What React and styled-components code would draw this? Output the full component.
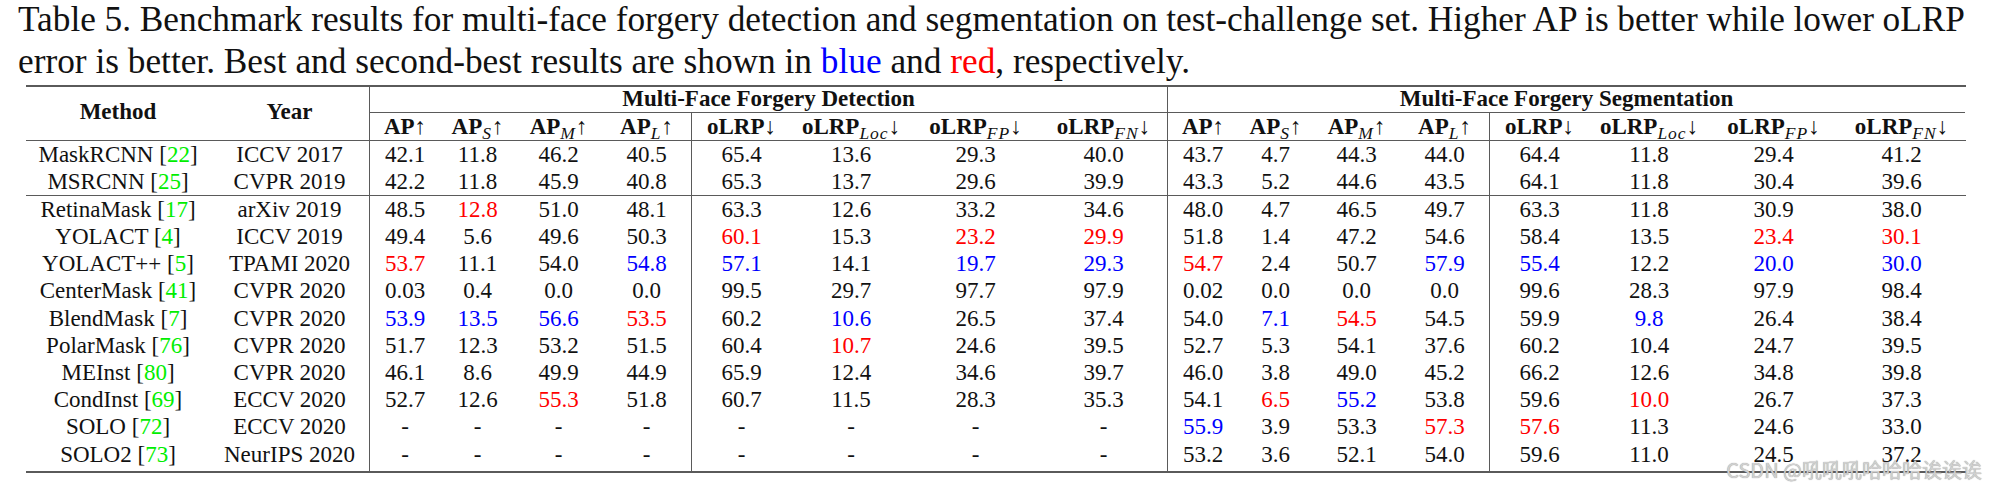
import React from "react";
import styled, { createGlobalStyle } from "styled-components";

const GlobalStyle = createGlobalStyle`
  html, body { margin: 0; padding: 0; background: #ffffff; }
  body { font-family: "Liberation Serif", "Times New Roman", serif; color: #111; }
`;

const COLS =
  "184px 159px 71px 75px 87px 89px 100px 120px 129px 127px 71px 75px 87px 89px 100px 120px 129px 127px";
const RULE = "#5a5a5a";

const Page = styled.div`
  position: relative;
  width: 2000px;
  height: 487px;
  overflow: hidden;
  background: #fff;
`;

const Caption = styled.div`
  margin: 0 0 0 18px;
  width: 1947px;
  font-size: 35.3px;
  color: #111;
`;

const JustLine = styled.div`
  line-height: 40px;
  text-align: justify;
  text-align-last: justify;
  word-spacing: -4px;
`;

const Line = styled.div`
  line-height: 43px;
  white-space: nowrap;
`;

const Tint = styled.span`
  color: ${(p) => p.$c};
`;

const Table = styled.div`
  margin: 2px 0 0 26px;
  width: 1940px;
  border-top: 2px solid ${RULE};
  border-bottom: 2px solid ${RULE};
  font-size: 23px;
`;

const Header = styled.div`
  display: grid;
  grid-template-columns: ${COLS};
  grid-template-rows: 26px 27px;
  border-bottom: 1px solid ${RULE};
  font-weight: bold;
`;

const SpanHead = styled.div`
  grid-row: 1 / span 2;
  grid-column: ${(p) => p.$col};
  display: flex;
  align-items: center;
  justify-content: center;
  padding-bottom: 4px;
`;

const GroupHead = styled.div`
  grid-row: 1;
  grid-column: ${(p) => p.$col} / span 8;
  text-align: center;
  line-height: 24px;
  border-left: 1px solid ${RULE};
  border-bottom: 1px solid ${RULE};
`;

const SubHead = styled.div`
  grid-row: 2;
  grid-column: ${(p) => p.$col};
  text-align: center;
  line-height: 27px;
  white-space: nowrap;
  border-left: ${(p) => (p.$sep ? `1px solid ${RULE}` : "none")};
`;

const Sub = styled.sub`
  font-style: italic;
  font-weight: normal;
  font-size: 17.5px;
  vertical-align: -5px;
  line-height: 0;
  letter-spacing: 1px;
`;

const Arrow = styled.span`
  font-weight: normal;
`;

const Row = styled.div`
  display: grid;
  grid-template-columns: ${COLS};
  height: ${(p) => p.$h}px;
  box-sizing: border-box;
  border-top: ${(p) => (p.$rule ? `1px solid ${RULE}` : "none")};
`;

const Cell = styled.div`
  text-align: center;
  line-height: 27px;
  white-space: nowrap;
  color: ${(p) => p.$c || "#111"};
  border-left: ${(p) => (p.$sep ? `1px solid ${RULE}` : "none")};
`;

const Cite = styled.span`
  color: #00ee00;
`;

const Watermark = styled.div`
  position: absolute;
  right: 18px;
  bottom: 5px;
  font-family: "Noto Sans CJK SC", "Noto Sans", sans-serif;
  font-size: 20px;
  line-height: 24px;
  color: #d0d0d0;
  text-shadow: 0 0 1px #8a8a8a;
`;

const SUBS = [
  { b: "AP", s: null, a: "↑" },
  { b: "AP", s: "S", a: "↑" },
  { b: "AP", s: "M", a: "↑" },
  { b: "AP", s: "L", a: "↑" },
  { b: "oLRP", s: null, a: "↓" },
  { b: "oLRP", s: "Loc", a: "↓" },
  { b: "oLRP", s: "FP", a: "↓" },
  { b: "oLRP", s: "FN", a: "↓" },
];

const B = "#0000ff";
const R = "#ff0000";

const ROWS = [
  ["MaskRCNN", "22", "ICCV 2017", ["42.1", "11.8", "46.2", "40.5", "65.4", "13.6", "29.3", "40.0", "43.7", "4.7", "44.3", "44.0", "64.4", "11.8", "29.4", "41.2"]],
  ["MSRCNN", "25", "CVPR 2019", ["42.2", "11.8", "45.9", "40.8", "65.3", "13.7", "29.6", "39.9", "43.3", "5.2", "44.6", "43.5", "64.1", "11.8", "30.4", "39.6"]],
  ["RetinaMask", "17", "arXiv 2019", ["48.5", ["12.8", R], "51.0", "48.1", "63.3", "12.6", "33.2", "34.6", "48.0", "4.7", "46.5", "49.7", "63.3", "11.8", "30.9", "38.0"]],
  ["YOLACT", "4", "ICCV 2019", ["49.4", "5.6", "49.6", "50.3", ["60.1", R], "15.3", ["23.2", R], ["29.9", R], "51.8", "1.4", "47.2", "54.6", "58.4", "13.5", ["23.4", R], ["30.1", R]]],
  ["YOLACT++", "5", "TPAMI 2020", [["53.7", R], "11.1", "54.0", ["54.8", B], ["57.1", B], "14.1", ["19.7", B], ["29.3", B], ["54.7", R], "2.4", "50.7", ["57.9", B], ["55.4", B], "12.2", ["20.0", B], ["30.0", B]]],
  ["CenterMask", "41", "CVPR 2020", ["0.03", "0.4", "0.0", "0.0", "99.5", "29.7", "97.7", "97.9", "0.02", "0.0", "0.0", "0.0", "99.6", "28.3", "97.9", "98.4"]],
  ["BlendMask", "7", "CVPR 2020", [["53.9", B], ["13.5", B], ["56.6", B], ["53.5", R], "60.2", ["10.6", B], "26.5", "37.4", "54.0", ["7.1", B], ["54.5", R], "54.5", "59.9", ["9.8", B], "26.4", "38.4"]],
  ["PolarMask", "76", "CVPR 2020", ["51.7", "12.3", "53.2", "51.5", "60.4", ["10.7", R], "24.6", "39.5", "52.7", "5.3", "54.1", "37.6", "60.2", "10.4", "24.7", "39.5"]],
  ["MEInst", "80", "CVPR 2020", ["46.1", "8.6", "49.9", "44.9", "65.9", "12.4", "34.6", "39.7", "46.0", "3.8", "49.0", "45.2", "66.2", "12.6", "34.8", "39.8"]],
  ["CondInst", "69", "ECCV 2020", ["52.7", "12.6", ["55.3", R], "51.8", "60.7", "11.5", "28.3", "35.3", "54.1", ["6.5", R], ["55.2", B], "53.8", "59.6", ["10.0", R], "26.7", "37.3"]],
  ["SOLO", "72", "ECCV 2020", ["-", "-", "-", "-", "-", "-", "-", "-", ["55.9", B], "3.9", "53.3", ["57.3", R], ["57.6", R], "11.3", "24.6", "33.0"]],
  ["SOLO2", "73", "NeurIPS 2020", ["-", "-", "-", "-", "-", "-", "-", "-", "53.2", "3.6", "52.1", "54.0", "59.6", "11.0", "24.5", "37.2"]],
];

const HEIGHTS = [27, 27, 28, 27.2, 27.2, 27.2, 27.2, 27.2, 27.2, 27.2, 27.2, 30.4];

const isSep = (i) => i % 4 === 0;

export default function App() {
  return (
    <Page>
      <GlobalStyle />
      <Caption>
        <JustLine>
          Table 5. Benchmark results for multi-face forgery detection and segmentation on test-challenge set. Higher AP is better while lower oLRP
        </JustLine>
        <Line>
          error is better. Best and second-best results are shown in <Tint $c="#0000ff">blue</Tint> and{" "}
          <Tint $c="#ff0000">red</Tint>, respectively.
        </Line>
      </Caption>
      <Table>
        <Header>
          <SpanHead $col={1}>Method</SpanHead>
          <SpanHead $col={2}>Year</SpanHead>
          <GroupHead $col={3}>Multi-Face Forgery Detection</GroupHead>
          <GroupHead $col={11}>Multi-Face Forgery Segmentation</GroupHead>
          {[...SUBS, ...SUBS].map((h, i) => (
            <SubHead key={i} $sep={isSep(i)} $col={i + 3}>
              {h.b}
              {h.s && <Sub>{h.s}</Sub>}
              <Arrow>{h.a}</Arrow>
            </SubHead>
          ))}
        </Header>
        {ROWS.map(([name, cite, year, vals], r) => (
          <Row key={name} $h={HEIGHTS[r]} $rule={r === 2}>
            <Cell>
              {name} [<Cite>{cite}</Cite>]
            </Cell>
            <Cell>{year}</Cell>
            {vals.map((v, i) => {
              const [t, c] = Array.isArray(v) ? v : [v, null];
              return (
                <Cell key={i} $sep={isSep(i)} $c={c}>
                  {t}
                </Cell>
              );
            })}
          </Row>
        ))}
      </Table>
      <Watermark>CSDN @吼吼吼哈哈哈诶诶诶</Watermark>
    </Page>
  );
}
